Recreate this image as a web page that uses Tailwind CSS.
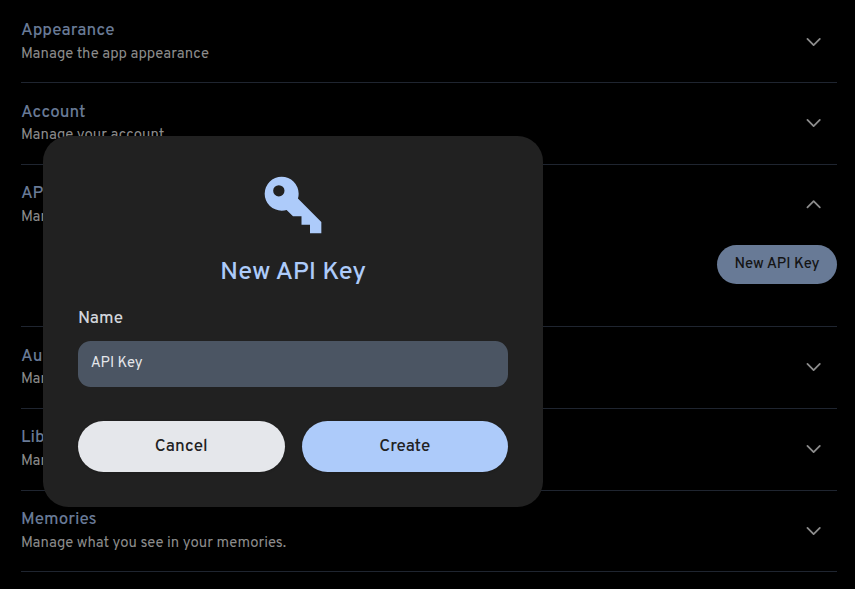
<!DOCTYPE html>
<html lang="en" class="text-[17px]">
<head>
<meta charset="utf-8">
<title>Settings</title>
<script src="https://cdn.jsdelivr.net/npm/@tailwindcss/browser@4"></script>
</head>
<body class="h-[589px] overflow-hidden bg-black font-[Overpass,Roboto,sans-serif] text-[17px] leading-[25.5px] text-[#8c8c8c]">
<svg class="hidden">
  <symbol id="chevron" viewBox="0 0 24 24"><path d="M19 9l-7 7-7-7" fill="none" stroke="currentColor" stroke-width="2" stroke-linecap="round" stroke-linejoin="round"/></symbol>
</svg>
<main class="flex flex-col pt-[1.25px] pr-[18px] pl-[21px]">
  <section class="flex h-[81.75px] items-center justify-between border-b border-[#1f2530] pr-[12.5px]">
    <div><h2 class="pt-[0.5px] font-medium text-[#687a96]">Appearance</h2><p class="-mt-[0.75px] pb-[0.25px] text-[14.875px] leading-[21.25px]">Manage the app appearance</p></div>
    <svg class="mb-px size-5"><use href="#chevron"/></svg>
  </section>
  <section class="flex h-[81.75px] items-center justify-between border-b border-[#1f2530] pr-[12.5px]">
    <div><h2 class="pt-[0.5px] font-medium text-[#687a96]">Account</h2><p class="-mt-[0.75px] pb-[0.25px] text-[14.875px] leading-[21.25px]">Manage your account</p></div>
    <svg class="mb-px size-5"><use href="#chevron"/></svg>
  </section>
  <section class="h-[162.25px] border-b border-[#1f2530]">
    <div class="flex h-[80.25px] items-center justify-between pr-[12.5px]">
      <div><h2 class="pt-[0.5px] font-medium text-[#687a96]">AP</h2><p class="-mt-[0.75px] pb-[0.25px] text-[14.875px] leading-[21.25px]">Man</p></div>
      <svg class="mb-px size-5 rotate-180"><use href="#chevron"/></svg>
    </div>
    <div class="flex justify-end">
      <button class="h-[39px] w-[120px] rounded-full bg-[#687a96] text-[14.875px] leading-[21.25px] font-medium text-[#141414]">New API Key</button>
    </div>
  </section>
  <section class="flex h-[81.75px] items-center justify-between border-b border-[#1f2530] pr-[12.5px]">
    <div><h2 class="pt-[0.5px] font-medium text-[#687a96]">Au</h2><p class="-mt-[0.75px] pb-[0.25px] text-[14.875px] leading-[21.25px]">Man</p></div>
    <svg class="mb-px size-5"><use href="#chevron"/></svg>
  </section>
  <section class="flex h-[81.75px] items-center justify-between border-b border-[#1f2530] pr-[12.5px]">
    <div><h2 class="pt-[0.5px] font-medium text-[#687a96]">Lib</h2><p class="-mt-[0.75px] pb-[0.25px] text-[14.875px] leading-[21.25px]">Man</p></div>
    <svg class="mb-px size-5"><use href="#chevron"/></svg>
  </section>
  <section class="flex h-[81.75px] items-center justify-between border-b border-[#1f2530] pr-[12.5px]">
    <div><h2 class="pt-[0.5px] font-medium text-[#687a96]">Memories</h2><p class="-mt-[0.75px] pb-[0.25px] text-[14.875px] leading-[21.25px]">Manage what you see in your memories.</p></div>
    <svg class="mb-px size-5"><use href="#chevron"/></svg>
  </section>
</main>

<div role="dialog" class="absolute top-[136px] left-[43px] flex h-[371px] w-[500px] flex-col rounded-[25.5px] bg-[#212121] px-[35px] pt-[35px]">
  <div class="flex flex-col items-center gap-[17px] text-[#adcbfa]">
    <svg class="size-[68px]" viewBox="0 0 24 24" fill="currentColor"><path d="M22,18V22H18V19H15V16H12L9.74,13.74C9.19,13.91 8.61,14 8,14A6,6 0 0,1 2,8A6,6 0 0,1 8,2A6,6 0 0,1 14,8C14,8.61 13.91,9.19 13.74,9.74L22,18M7,5A2,2 0 0,0 5,7A2,2 0 0,0 7,9A2,2 0 0,0 9,7A2,2 0 0,0 7,5Z"/></svg>
    <h1 class="text-[25.5px] leading-[34px] font-medium">New API Key</h1>
  </div>
  <label for="name" class="mt-[17px] font-medium text-[#d1d5db]">Name</label>
  <input id="name" value="API Key" class="mt-[8.5px] h-[46px] w-full rounded-[12.75px] bg-[#4b5563] px-[12.75px] pb-[2px] text-[14.875px] leading-[21.25px] text-[#e5e7eb]">
  <div class="mt-[34px] flex gap-[17px]">
    <button class="h-[51px] flex-1 rounded-full bg-[#e5e7eb] pt-[1.5px] font-medium text-[#212121] shadow">Cancel</button>
    <button class="h-[51px] flex-1 rounded-full bg-[#adcbfa] pt-[1.5px] font-medium text-[#212121] shadow">Create</button>
  </div>
</div>
</body>
</html>
